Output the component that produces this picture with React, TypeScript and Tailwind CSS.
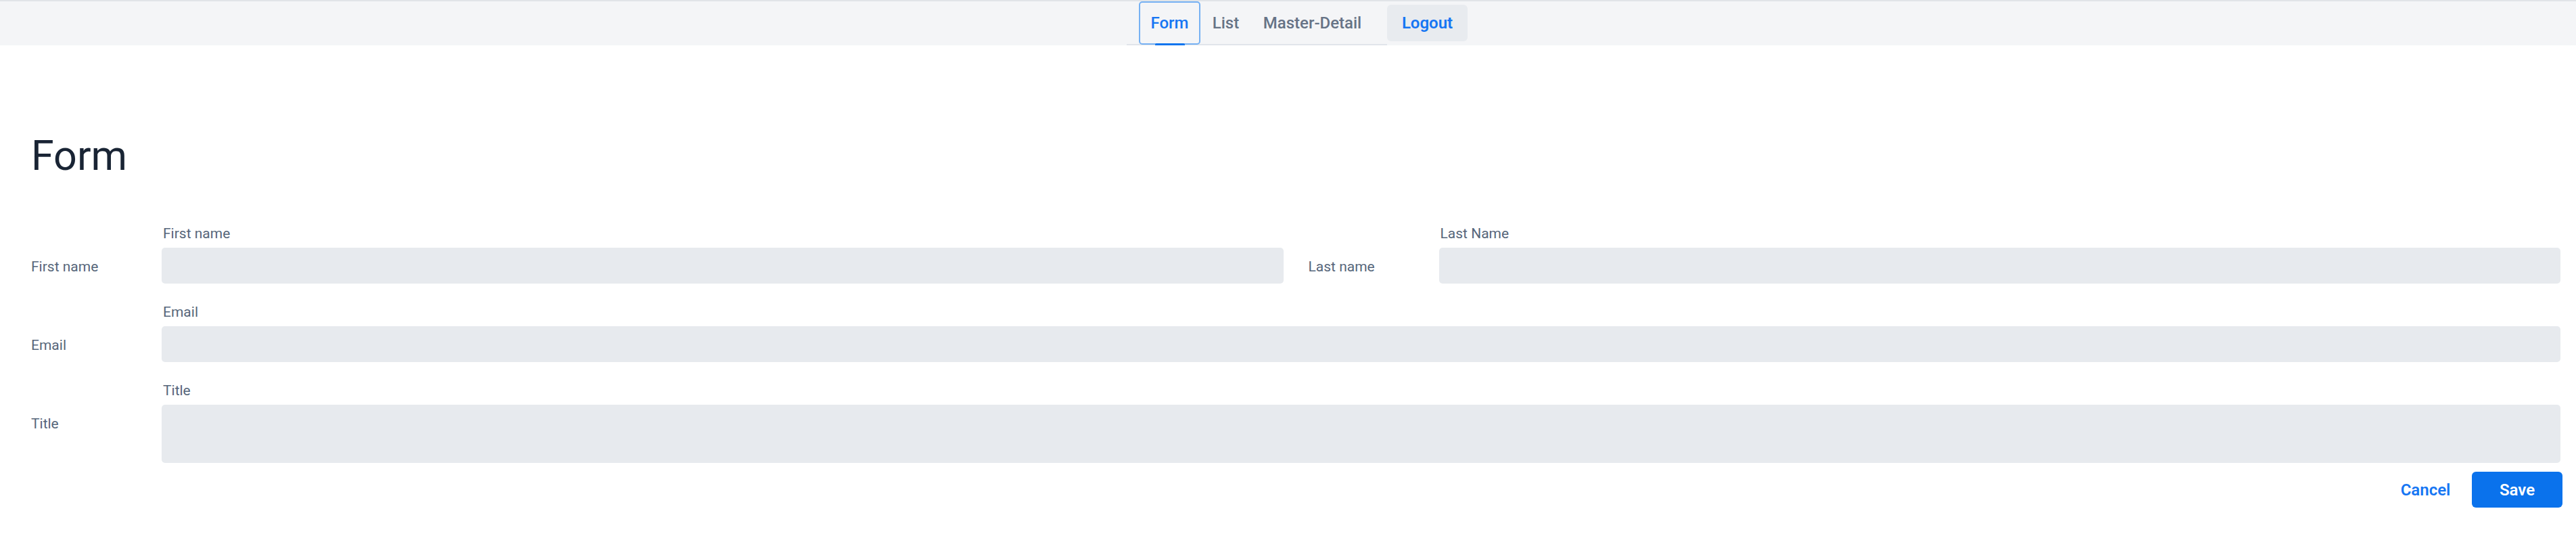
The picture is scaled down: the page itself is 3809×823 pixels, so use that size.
import React from 'react';

const TABS = [
  { name: 'Form', width: 'w-[91px]', active: true },
  { name: 'List', width: 'w-[75px]', active: false },
  { name: 'Master-Detail', width: 'w-[181px]', active: false },
];

function Field({ side, label, tall = false }: { side: string; label: string; tall?: boolean }) {
  return (
    <div className="flex">
      <div className="w-[193px] shrink-0 pt-[49px] text-[21px] leading-[21px] text-[#56667a]">{side}</div>
      <div className="flex flex-1 flex-col">
        <div className="pb-[10px] pl-[2px] text-[21px] leading-[21px] text-[#56667a]">{label}</div>
        <div className={tall ? 'h-[86px] rounded-[5px] bg-[#e7eaee]' : 'h-[53px] rounded-[5px] bg-[#e7eaee]'} />
      </div>
    </div>
  );
}

export default function App() {
  return (
    <div className="min-h-screen bg-white font-['Roboto',sans-serif]">
      <header className="flex h-[67px] justify-center border-t-2 border-[#e1e4e8] bg-[#f4f5f7]">
        <div className="ml-[27px] flex">
          <nav className="flex h-[65px] pl-[18px] pr-[20px] shadow-[inset_0_-2px_0_#e1e5ea]">
            {TABS.map((tab) => (
              <div
                key={tab.name}
                className={
                  tab.active
                    ? `relative flex h-[64px] items-center justify-center rounded-[5px] border-2 border-[#76b1f3] text-[24px] font-medium text-[#1676f3] ${tab.width}`
                    : `flex h-[64px] items-center justify-center text-[24px] font-medium text-[#667386] ${tab.width}`
                }
              >
                {tab.name}
                {tab.active && (
                  <span className="absolute bottom-[-3px] left-1/2 h-[3px] w-[44px] -translate-x-1/2 rounded-t-[2px] bg-[#0b74ee]" />
                )}
              </div>
            ))}
          </nav>
          <button className="mt-[5px] h-[54px] w-[119px] rounded-[6px] bg-[#e8ebef] text-[24px] font-semibold text-[#1676f3]">
            Logout
          </button>
        </div>
      </header>

      <main className="pl-[46px] pr-[20px]">
        <h1 className="mt-[126px] h-[75px] text-[61px] leading-[75px] font-normal text-[#192434]">Form</h1>

        <div className="mt-[67px] grid grid-cols-2 gap-x-[37px] gap-y-[32px] pr-[3px]">
          <Field side="First name" label="First name" />
          <Field side="Last name" label="Last Name" />
          <div className="col-span-2">
            <Field side="Email" label="Email" />
          </div>
          <div className="col-span-2">
            <Field side="Title" label="Title" tall />
          </div>
        </div>

        <div className="mt-[13px] flex justify-end gap-[16px]">
          <button className="h-[53px] w-[105px] text-[24px] font-semibold text-[#1676f3]">Cancel</button>
          <button className="h-[53px] w-[134px] rounded-[6px] bg-[#0a72ec] text-[24px] font-semibold text-white">Save</button>
        </div>
      </main>
    </div>
  );
}
